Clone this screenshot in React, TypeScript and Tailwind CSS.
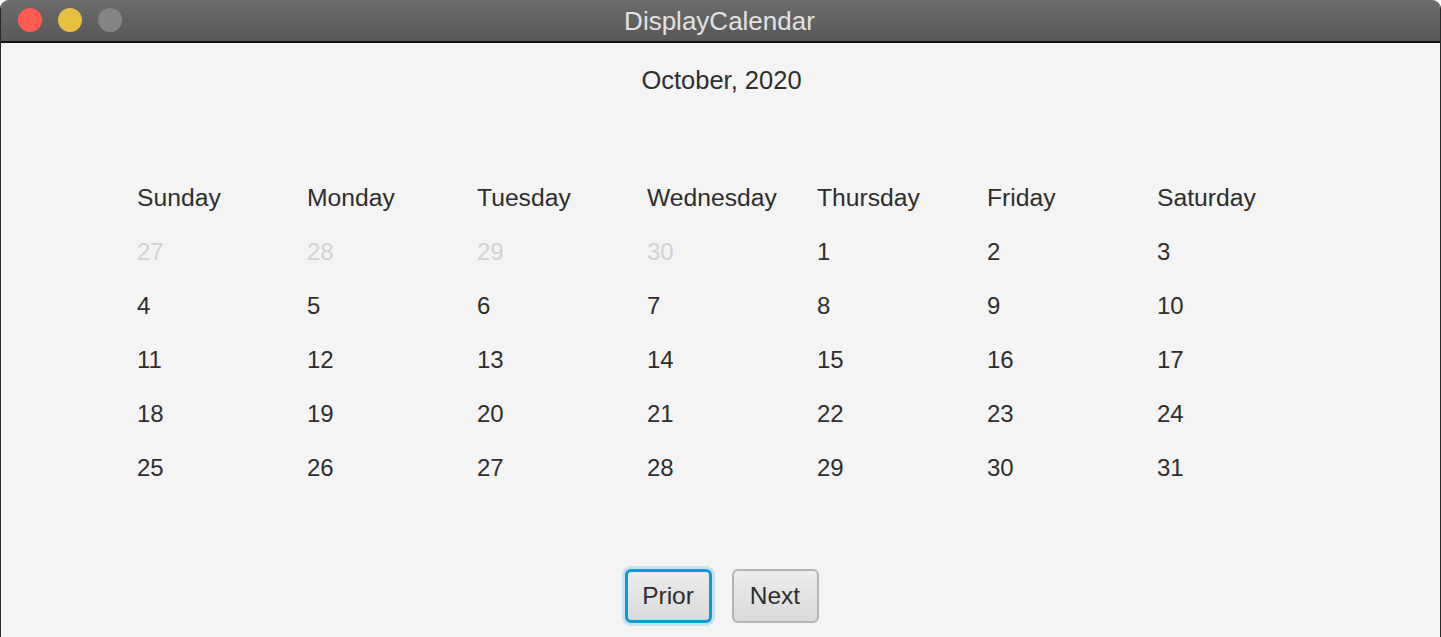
import React from "react";

const days = ["Sunday", "Monday", "Tuesday", "Wednesday", "Thursday", "Friday", "Saturday"];

type Cell = { n: number; muted?: boolean };

const cells: Cell[] = [
  { n: 27, muted: true },
  { n: 28, muted: true },
  { n: 29, muted: true },
  { n: 30, muted: true },
  ...Array.from({ length: 31 }, (_, i) => ({ n: i + 1 })),
];

export default function App() {
  return (
    <div className="w-[1441px] h-[637px] bg-white overflow-hidden" style={{ fontFamily: '"Liberation Sans", Arial, sans-serif' }}>
      <div className="w-full h-full flex flex-col rounded-t-[9px] overflow-hidden border-x border-[#2a2a2a] bg-[#f4f4f4]">
        {/* Title bar */}
        <div className="relative h-[43px] shrink-0 flex items-center justify-center bg-gradient-to-b from-[#6c6c6c] to-[#585858] border-b-2 border-[#111]">
          <div className="absolute left-[17px] top-[8px] flex gap-[16px]">
            <span className="w-[24px] h-[24px] rounded-full bg-[#fe5b52]" />
            <span className="w-[24px] h-[24px] rounded-full bg-[#e8c040]" />
            <span className="w-[24px] h-[24px] rounded-full bg-[#858585]" />
          </div>
          <span className="text-[26px] leading-none text-[#e2e2e2] pr-[2px]">DisplayCalendar</span>
        </div>

        {/* Body */}
        <div className="flex flex-col items-center pt-[22px] text-[#2e2e2e]">
          <div className="text-[25.5px] leading-[30px] pl-[2px]">October, 2020</div>

          <div className="mt-[76px] self-start pl-[136px] grid grid-cols-[repeat(7,170px)]">
            {days.map((d) => (
              <div key={d} className="h-[54px] flex items-center text-[24.7px]">
                {d}
              </div>
            ))}
            {cells.map((c, i) => (
              <div
                key={i}
                className={`h-[54px] flex items-center text-[24px] ${c.muted ? "text-[#d2d2d2]" : "text-[#2e2e2e]"}`}
              >
                {c.n}
              </div>
            ))}
          </div>

          <div className="mt-[74px] flex gap-[20px] pl-[2px]">
            <button className="w-[87px] h-[54px] rounded-[6px] border-[3px] border-[#0c9ad6] ring-[3px] ring-[#0c9ad6]/20 bg-gradient-to-b from-[#ececec] to-[#dadada] text-[24.5px] text-[#2e2e2e] flex items-center justify-center">
              Prior
            </button>
            <button className="w-[87px] h-[54px] rounded-[6px] border-2 border-[#b4b4b4] bg-gradient-to-b from-[#ececec] to-[#dadada] text-[24.5px] text-[#2e2e2e] flex items-center justify-center">
              Next
            </button>
          </div>
        </div>
      </div>
    </div>
  );
}
